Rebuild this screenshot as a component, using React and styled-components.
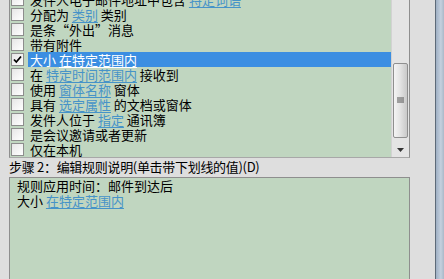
import React from 'react';
import styled, { createGlobalStyle } from 'styled-components';

const Global = createGlobalStyle`
  html, body { margin: 0; padding: 0; }
  body {
    background: #dedede;
    font-family: "Noto Sans CJK SC", "Noto Sans", sans-serif;
    font-size: 13px;
    color: #000;
  }
`

const Page = styled.div`
  width: 444px;
  height: 279px;
  overflow: hidden;
  display: flex;
  background: #dedede;
`

const Main = styled.div`
  width: 401px;
  margin-left: 9px;
  display: flex;
  flex-direction: column;
`

const Frame = styled.div`
  margin-left: auto;
  width: 8px;
  border-left: 1px solid #5d6a78;
  background: linear-gradient(to right, #9fb0c4, #c4d0de 60%, #aab8c8);
`

const ListBox = styled.div`
  height: 158px;
  display: flex;
  border-left: 1px solid #8e8e8e;
  border-right: 1px solid #8e8e8e;
  border-bottom: 1px solid #a8a8a8;
  box-sizing: border-box;
`

const ListArea = styled.div`
  flex: 1;
  background: #c0d6c0;
  overflow: hidden;
`

const Scroller = styled.div`
  margin-top: -8px;
`

const Row = styled.div`
  height: 15px;
  display: flex;
  align-items: center;
  white-space: nowrap;
`

const Box = styled.span`
  width: 11px;
  height: 11px;
  margin: 0 4px 0 1px;
  flex: none;
  border: 1px solid #8d8d8d;
  background: linear-gradient(135deg, #e6e6e6, #ffffff);
  display: flex;
  align-items: center;
  justify-content: center;
`

const Label = styled.span`
  height: 15px;
  line-height: 15px;
  flex: 1;
  padding-left: 2px;
  background: ${p => (p.$selected ? '#3b8ee2' : 'transparent')};
  color: ${p => (p.$selected ? '#ffffff' : '#000')};
`

const Link = styled.span`
  display: inline-block;
  height: 15px;
  line-height: 15px;
  color: ${p => (p.$light ? '#ffffff' : '#4693c8')};
  text-decoration: underline;
  text-underline-offset: 2px;
`

const Scrollbar = styled.div`
  width: 17px;
  background: #e4e4e4;
  border-left: 1px solid #d2d2d2;
  display: flex;
  flex-direction: column;
  align-items: center;
`

const Thumb = styled.div`
  margin-top: 63px;
  width: 15px;
  height: 75px;
  box-sizing: border-box;
  border: 1px solid #8f8f8f;
  border-radius: 2px;
  background: linear-gradient(to right, #f4f4f4, #e2e2e2 50%, #c9c9c9);
  display: flex;
  align-items: center;
  justify-content: center;
`

const ArrowDown = styled.div`
  margin-top: 6px;
  height: 12px;
  display: flex;
  align-items: center;
`

const StepLabel = styled.div`
  height: 19px;
  line-height: 17px;
  white-space: nowrap;
  letter-spacing: -0.3px;
`

const DescBox = styled.div`
  flex: 1;
  background: #c0d6c0;
  border: 1px solid #8e8e8e;
  border-bottom: none;
  padding: 0 0 0 7px;
  line-height: 15px;
`

const DescLine = styled.div`
  height: 15px;
  white-space: nowrap;
`

const Check = () => (
  <svg width="11" height="11" viewBox="0 0 11 11">
    <path d="M2 5.5 L4.3 8 L9 2.5" fill="none" stroke="#000" strokeWidth="1.8" />
  </svg>
);

const rows = [
  ['发件人电子邮件地址中包含 ', '特定词语', ''],
  ['分配为 ', '类别', ' 类别'],
  ['是条“外出”消息'],
  ['带有附件'],
  ['大小 ', '在特定范围内', '', true],
  ['在 ', '特定时间范围内', ' 接收到'],
  ['使用 ', '窗体名称', ' 窗体'],
  ['具有 ', '选定属性', ' 的文档或窗体'],
  ['发件人位于 ', '指定', ' 通讯簿'],
  ['是会议邀请或者更新'],
  ['仅在本机'],
];

export default function App() {
  return (
    <Page>
      <Global />
      <Main>
        <ListBox>
          <ListArea>
            <Scroller>
              {rows.map(([pre, link, post, sel]) => (
                <Row key={pre + (link || '')}>
                  <Box>{sel && <Check />}</Box>
                  <Label $selected={sel}>
                    {pre}
                    {link && <Link $light={sel}>{link}</Link>}
                    {post}
                  </Label>
                </Row>
              ))}
            </Scroller>
          </ListArea>
          <Scrollbar>
            <Thumb>
              <svg width="7" height="7" viewBox="0 0 7 7">
                <path d="M0 1h7M0 3h7M0 5h7" stroke="#555" strokeWidth="1" />
              </svg>
            </Thumb>
            <ArrowDown>
              <svg width="7" height="4" viewBox="0 0 7 4">
                <path d="M0 0h7L3.5 4z" fill="#333" />
              </svg>
            </ArrowDown>
          </Scrollbar>
        </ListBox>
        <StepLabel>步骤 2：编辑规则说明(单击带下划线的值)(D)</StepLabel>
        <DescBox>
          <DescLine>规则应用时间：邮件到达后</DescLine>
          <DescLine>大小 <Link>在特定范围内</Link></DescLine>
        </DescBox>
      </Main>
      <Frame />
    </Page>
  );
}
